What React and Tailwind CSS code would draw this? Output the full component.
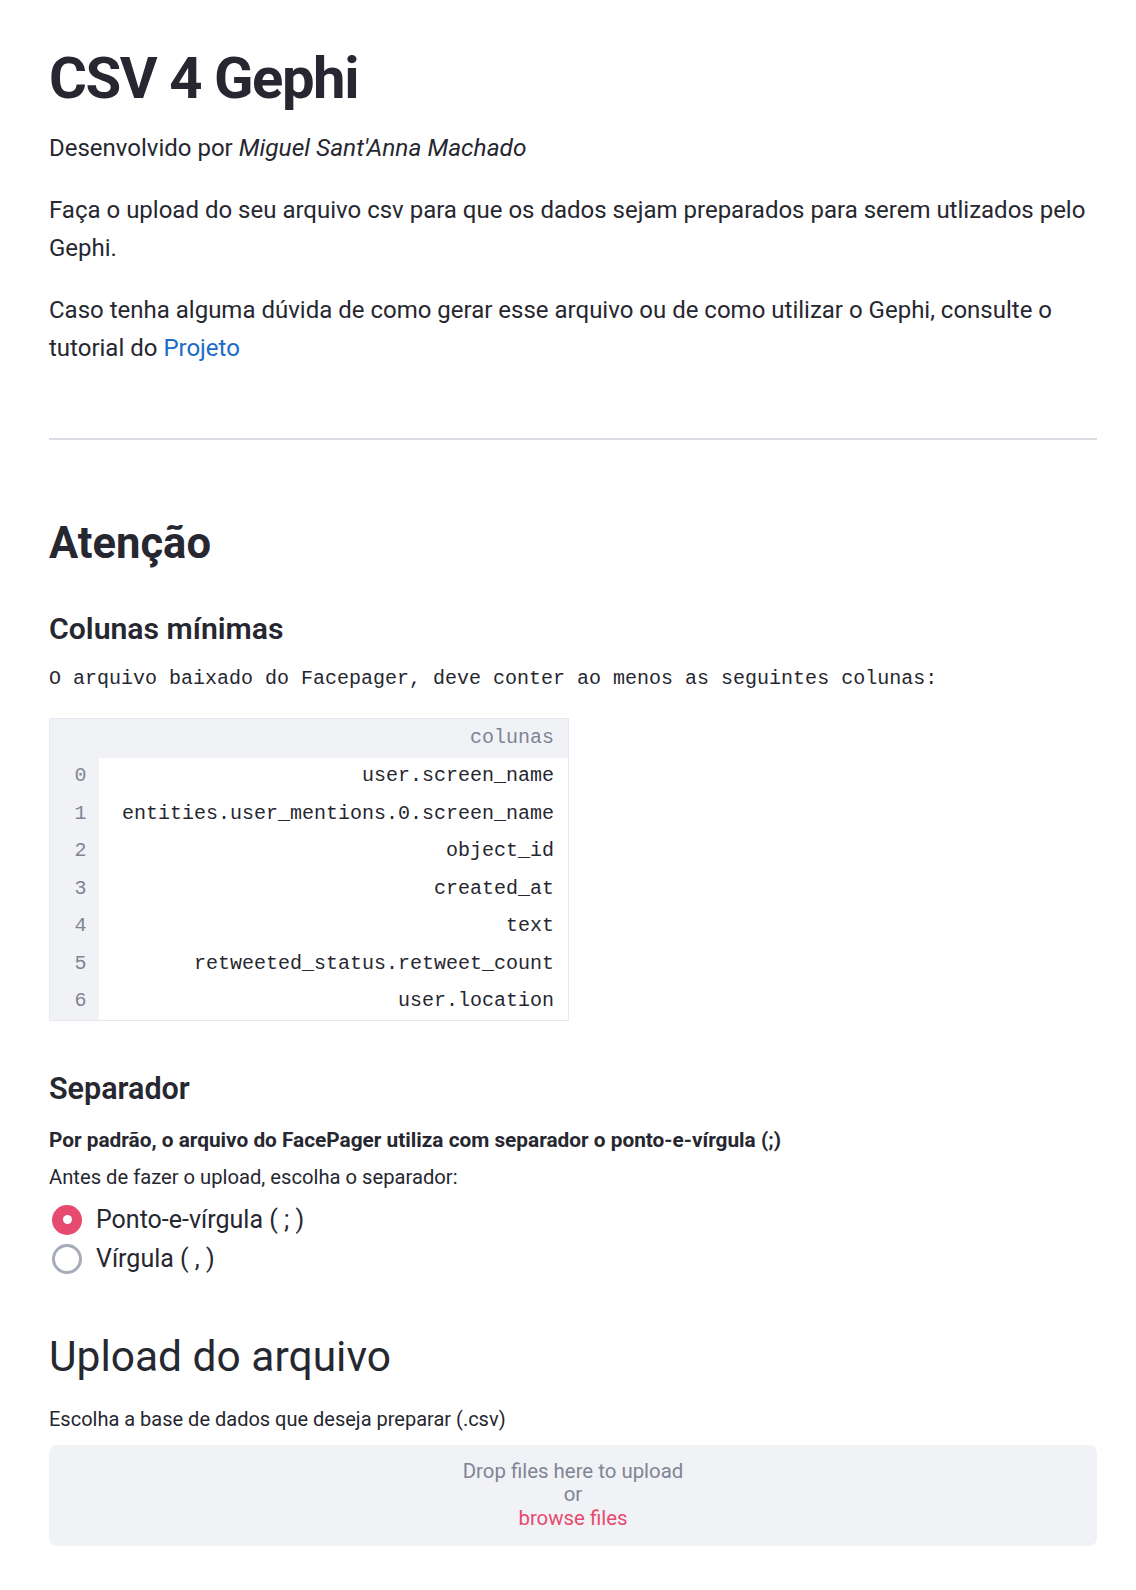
import React, { useState } from "react";

const columns = [
    "user.screen_name",
    "entities.user_mentions.0.screen_name",
    "object_id",
    "created_at",
    "text",
    "retweeted_status.retweet_count",
    "user.location",
];

const sans = "font-['Roboto','Liberation_Sans',sans-serif]";
const mono = "font-['Liberation_Mono','DejaVu_Sans_Mono',monospace]";

function Radio({ checked, label, onClick }) {
    return (
        <div className="flex items-center h-[38px] cursor-pointer" onClick={onClick}>
            <div className="w-[30px] h-[30px] ml-[3px] mr-[14px] flex items-center justify-center">
                {checked ? (
                    <div className="w-[30px] h-[30px] rounded-full bg-[#e64a6e] flex items-center justify-center">
                        <div className="w-[9px] h-[9px] rounded-full bg-white"></div>
                    </div>
                ) : (
                    <div className="w-[30px] h-[30px] rounded-full border-[3px] border-[#a6abb9] bg-white"></div>
                )}
            </div>
            <span className="text-[25px] leading-[38px]">{label}</span>
        </div>
    );
}

function App() {
    const [sep, setSep] = useState(";");

    return (
        <div className={`w-full min-h-screen bg-white text-[#262730] ${sans}`}>
            <div className="pl-[49px] pr-[39px] pt-[38px] pb-[40px]">
                <h1 className="text-[58px] leading-[80px] font-bold tracking-tight">CSV 4 Gephi</h1>

                <p className="mt-[11px] text-[24px] leading-[37px]">
                    Desenvolvido por <em className="text-[24.5px]">Miguel Sant'Anna Machado</em>
                </p>

                <p className="mt-[25px] text-[24px] leading-[37.5px]">
                    Faça o upload do seu arquivo csv para que os dados sejam preparados para serem utlizados pelo Gephi.
                </p>

                <p className="mt-[25px] text-[24px] leading-[37.5px]">
                    Caso tenha alguma dúvida de como gerar esse arquivo ou de como utilizar o Gephi, consulte o tutorial
                    do <a href="#" className="text-[#1c6bc8]">Projeto</a>
                </p>

                <hr className="mt-[71px] border-0 h-[2px] bg-[#dadde4]" />

                <h2 className="mt-[74px] text-[43.5px] leading-[60px] font-bold">Atenção</h2>

                <h3 className="mt-[31px] text-[30.2px] leading-[48px] font-semibold">Colunas mínimas</h3>

                <p className={`mt-[11px] text-[20px] leading-[30px] ${mono}`}>
                    O arquivo baixado do Facepager, deve conter ao menos as seguintes colunas:
                </p>

                {/* tabela das colunas */}
                <table className={`mt-[24px] w-[520px] border border-[#e6e9ef] border-collapse text-[20px] ${mono}`}>
                    <thead>
                        <tr className="h-[39px] bg-[#f0f2f6]">
                            <th className="w-[49px]"></th>
                            <th className="text-right pr-[14px] font-normal text-[#808495]">colunas</th>
                        </tr>
                    </thead>
                    <tbody>
                        {columns.map((c, i) => (
                            <tr key={c} className="h-[37.5px]">
                                <td className="bg-[#f0f2f6] text-right pr-[12px] text-[#808495]">{i}</td>
                                <td className="text-right pr-[14px]">{c}</td>
                            </tr>
                        ))}
                    </tbody>
                </table>

                <h3 className="mt-[44px] text-[30.5px] leading-[48px] font-semibold">Separador</h3>

                <p className="mt-[11px] text-[20.8px] leading-[32px] font-bold">
                    Por padrão, o arquivo do FacePager utiliza com separador o ponto-e-vírgula (;)
                </p>
                <p className="mt-[5px] text-[20.2px] leading-[32px]">Antes de fazer o upload, escolha o separador:</p>

                <div className="mt-[8px] flex flex-col gap-[1px]">
                    <Radio checked={sep === ";"} label="Ponto-e-vírgula ( ; )" onClick={() => setSep(";")} />
                    <Radio checked={sep === ","} label="Vírgula ( , )" onClick={() => setSep(",")} />
                </div>

                <h2 className="mt-[49px] text-[42.5px] leading-[60px] font-normal">Upload do arquivo</h2>

                <p className="mt-[17px] text-[20px] leading-[30px]">Escolha a base de dados que deseja preparar (.csv)</p>

                <div className="mt-[11px] h-[101px] rounded-lg bg-[#f0f2f6] flex flex-col items-center justify-center text-[20.4px] leading-[23.5px]">
                    <span className="text-[#808495]">Drop files here to upload</span>
                    <span className="text-[#808495]">or</span>
                    <span className="text-[#e64a6e] cursor-pointer">browse files</span>
                </div>
            </div>
        </div>
    );
}

export default App;
